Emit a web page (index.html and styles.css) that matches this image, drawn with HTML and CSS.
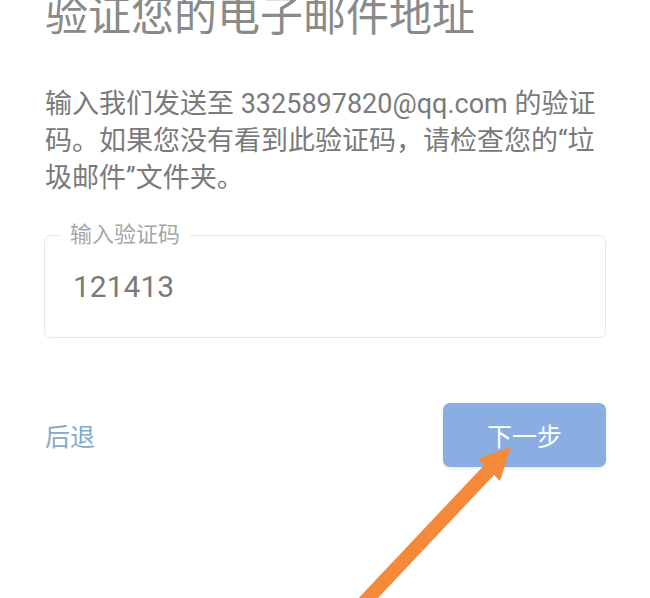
FILE: index.html
```html
<!DOCTYPE html>
<html lang="zh-CN">
<head>
<meta charset="utf-8">
<title>验证您的电子邮件地址</title>
<link rel="stylesheet" href="styles.css">
</head>
<body>
<main class="page">
  <h1 class="title">验证您的电子邮件地址</h1>
  <p class="desc">输入我们发送至 3325897820@qq.com 的验证码。如果您没有看到此验证码，请检查您的“垃圾邮件”文件夹。</p>
  <fieldset class="field">
    <legend class="field-label">输入验证码</legend>
    <div class="field-value">121413</div>
  </fieldset>
  <div class="actions">
    <a class="back">后退</a>
    <button class="next">下一步</button>
  </div>
</main>
<svg class="arrow" width="650" height="598" viewBox="0 0 650 598">
  <line x1="357" y1="610" x2="492" y2="467" stroke="#f5893a" stroke-width="14"/>
  <polygon points="511,447 478,459 500,481" fill="#f5893a"/>
</svg>
</body>
</html>
```
FILE: styles.css
```css
html, body {
  margin: 0;
  padding: 0;
  background: #ffffff;
  overflow: hidden;
}
body {
  font-family: Roboto, "Noto Sans CJK SC", sans-serif;
  width: 650px;
  height: 598px;
  position: relative;
}
.page {
  padding: 0 44px 0 45px;
}
.title {
  margin: -9px 0 0 0;
  font-size: 43px;
  line-height: 43px;
  font-weight: 400;
  color: #8a8a8a;
  font-family: "Noto Sans CJK SC", sans-serif;
  white-space: nowrap;
}
.desc {
  margin: 52px 0 0 0;
  font-size: 27px;
  line-height: 37px;
  color: #7a7a7a;
}
.field {
  margin: 27px 0 0 -1px;
  padding: 0 15px 0 15px;
  border: 1.5px solid #e8e8e8;
  border-radius: 6px;
  height: 114px;
  box-sizing: border-box;
}
.field-label {
  padding: 0 10px;
  font-size: 22px;
  line-height: 22px;
  color: #a6a6a6;
}
.field-value {
  padding: 23px 0 0 13px;
  font-size: 30px;
  line-height: 36px;
  color: #7a7a7a;
}
.actions {
  margin-top: 65px;
  display: flex;
  align-items: center;
  justify-content: space-between;
}
.back {
  font-size: 25px;
  color: #86a9cd;
}
.next {
  width: 163px;
  height: 64px;
  border: none;
  border-radius: 7px;
  background: #8aaee2;
  color: #ffffff;
  font-family: Roboto, "Noto Sans CJK SC", sans-serif;
  font-size: 25px;
  box-shadow: 0 1px 3px rgba(0, 0, 0, 0.12);
}
.arrow {
  position: absolute;
  left: 0;
  top: 0;
  pointer-events: none;
}
```
